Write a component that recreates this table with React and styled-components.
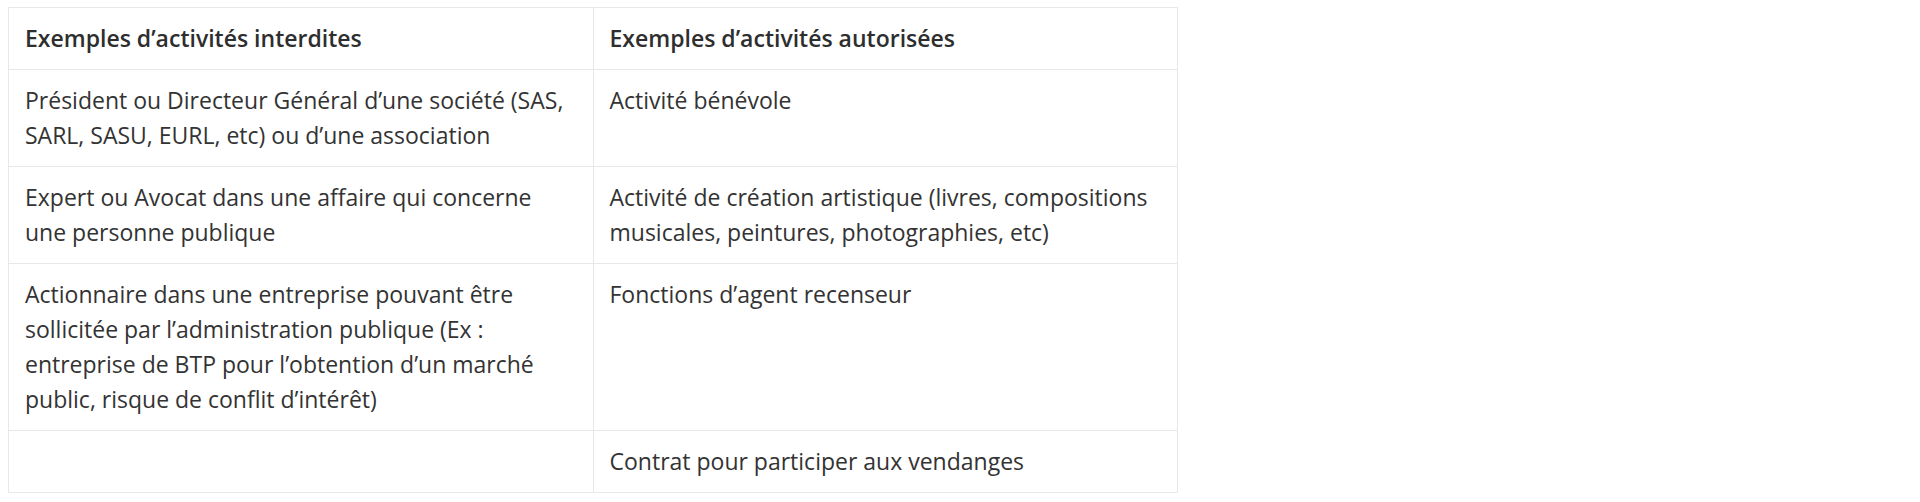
import React from "react";
import styled, { createGlobalStyle } from "styled-components";

const Global = createGlobalStyle`
  html, body { margin: 0; padding: 0; background: #ffffff; }
  body {
    font-family: "Open Sans", "Noto Sans", sans-serif;
    color: #323232;
  }
`;

const Page = styled.div`
  padding: 7px 8px;
`;

const Table = styled.table`
  width: 1170px;
  border-collapse: collapse;
  table-layout: fixed;
  border: 1px solid #e8e8e8;
`;

const HeadCell = styled.th`
  width: 50%;
  text-align: left;
  vertical-align: top;
  padding: 13px 24px 13px 16px;
  border: 1px solid #e8e8e8;
  font-size: 23px;
  font-weight: 600;
  line-height: 35px;
  color: #2e2e2e;
`;

const Cell = styled.td`
  vertical-align: top;
  padding: 13px 24px 13px 16px;
  border: 1px solid #e8e8e8;
  font-size: 23px;
  font-weight: 400;
  line-height: 35px;
  color: #333333;
`;

const rows = [
  [
    "Président ou Directeur Général d’une société (SAS, SARL, SASU, EURL, etc) ou d’une association",
    "Activité bénévole",
  ],
  [
    "Expert ou Avocat dans une affaire qui concerne une personne publique",
    "Activité de création artistique (livres, compositions musicales, peintures, photographies, etc)",
  ],
  [
    "Actionnaire dans une entreprise pouvant être sollicitée par l’administration publique (Ex : entreprise de BTP pour l’obtention d’un marché public, risque de conflit d’intérêt)",
    "Fonctions d’agent recenseur",
  ],
  ["", "Contrat pour participer aux vendanges"],
];

export default function App() {
  return (
    <>
      <Global />
      <Page>
        <Table>
          <thead>
            <tr>
              <HeadCell>Exemples d’activités interdites</HeadCell>
              <HeadCell>Exemples d’activités autorisées</HeadCell>
            </tr>
          </thead>
          <tbody>
            {rows.map((r, i) => (
              <tr key={i}>
                <Cell>{r[0] || "\u00a0"}</Cell>
                <Cell>{r[1]}</Cell>
              </tr>
            ))}
          </tbody>
        </Table>
      </Page>
    </>
  );
}
